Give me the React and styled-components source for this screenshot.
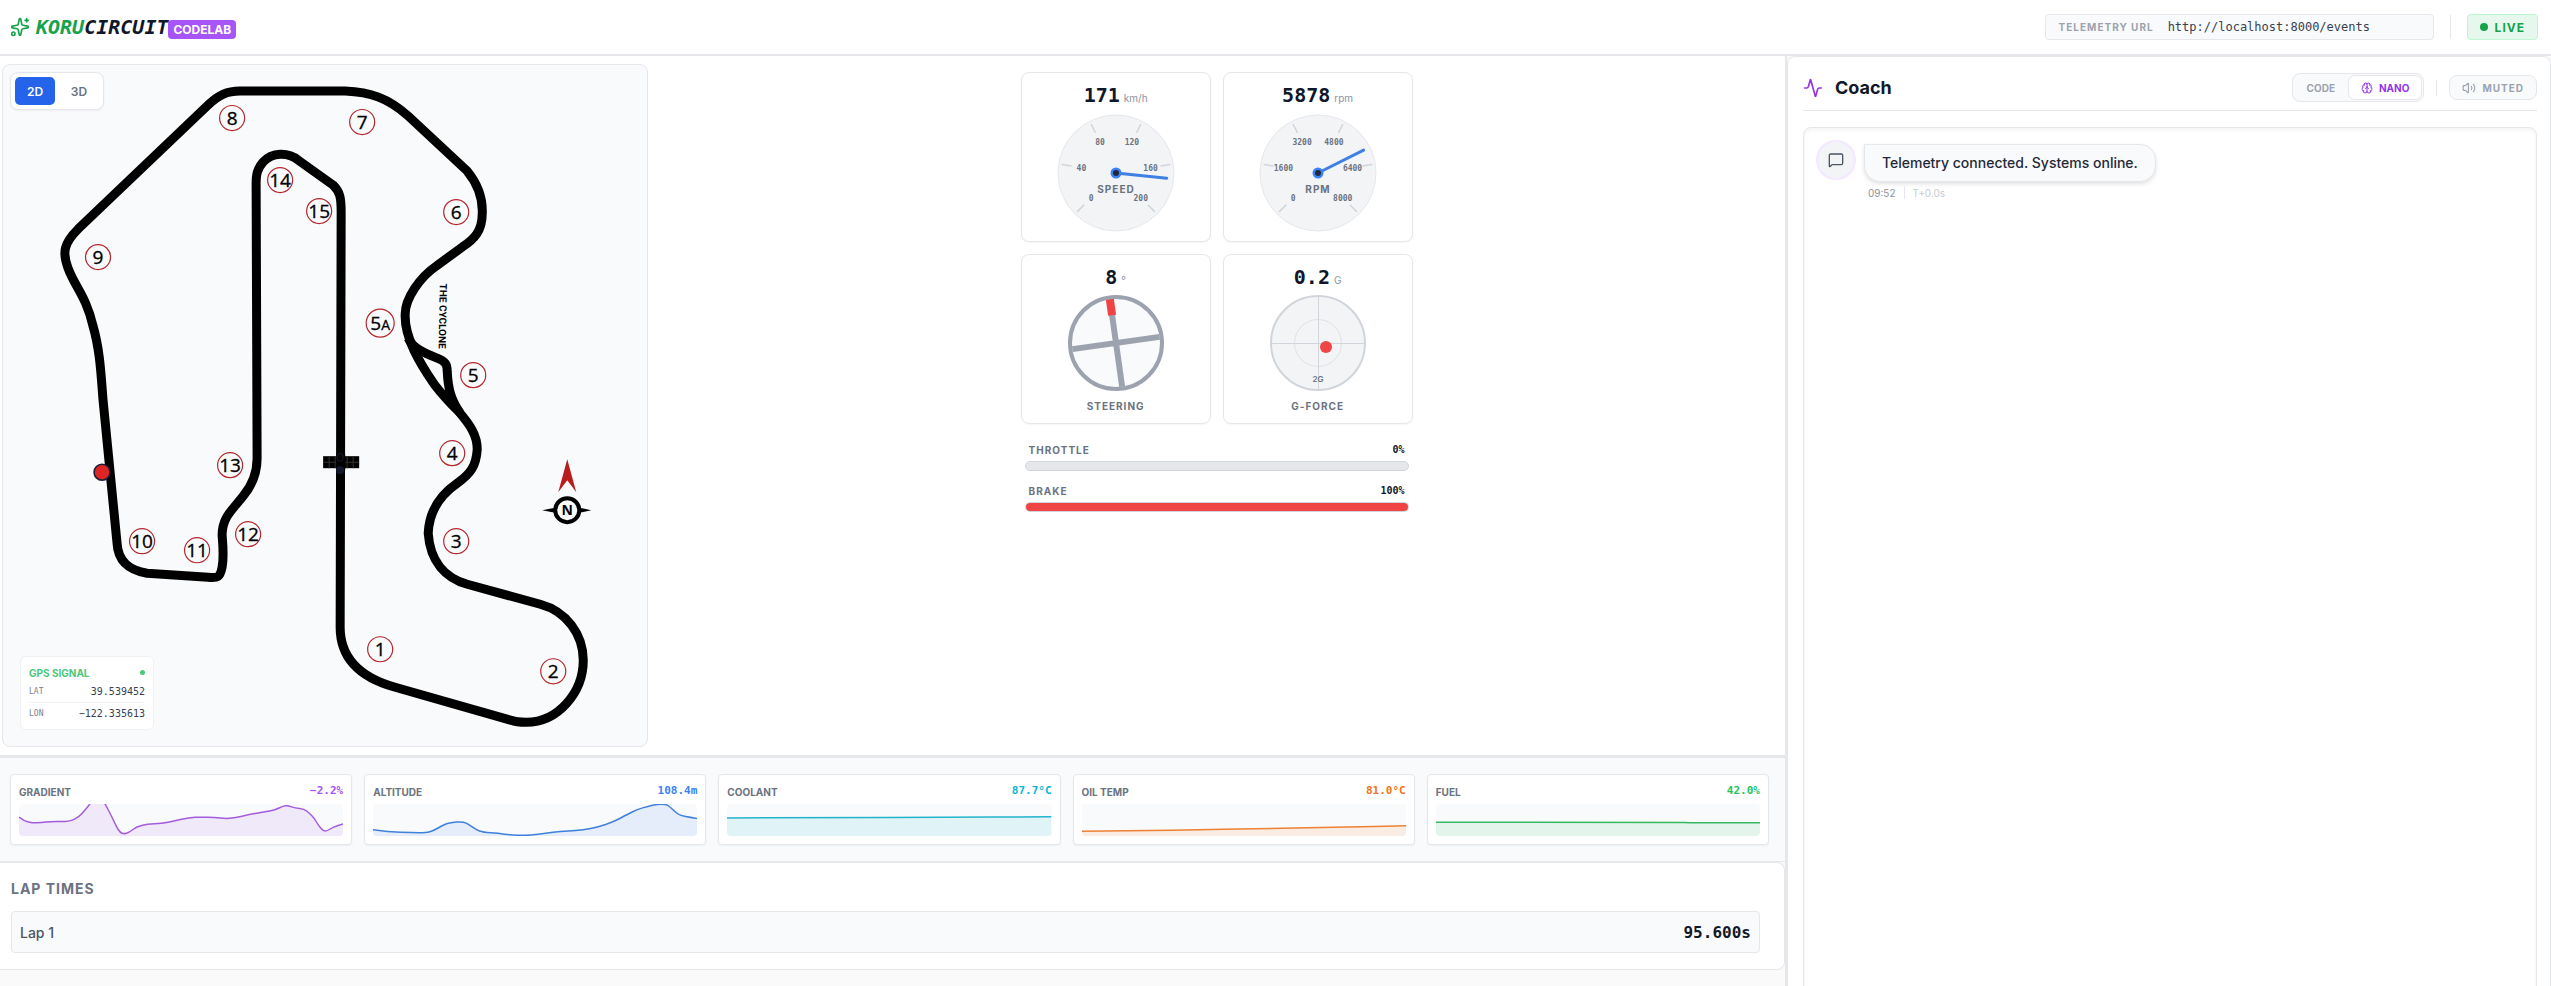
import React, { useState } from "react";
import styled, { createGlobalStyle } from "styled-components";
import { Activity, Brain, MessageSquare, Sparkles, Volume2 } from "lucide-react";

const sans = `Inter, "Liberation Sans", sans-serif`;
const mono = `"DejaVu Sans Mono", "Liberation Mono", monospace`;

const GlobalStyle = createGlobalStyle`
  * { box-sizing: border-box; }
  body {
    margin: 0;
    background: #fafafb;
    color: #111827;
    font-family: ${sans};
  }
  button, input { font-family: inherit; margin: 0; }
  ol, h1, h2, p { margin: 0; padding: 0; }
`;

const TRACK =
  "M340 627 L341 212 C341 198 340 192 333 185 L298 160 C288 152 272 152 263 162 C257 169 256 174 256 184 " +
  "L257 458 C257 474 252 485 243 496 C232 510 222 517 222 535 C223 548 224 556 222 567 C220 577 218 578 208 577 " +
  "L147 573 C130 570 118 562 117 543 L103 400 C101 375 100 350 93 326 C86 296 75 287 68 268 C62 252 64 243 78 229 " +
  "L208 105 C218 95 227 91 240 91 L345 91 C370 92 388 98 408 116 L467 171 C476 182 483 195 482 214 " +
  "C482 231 474 239 462 247 L436 266 C420 277 405 298 405 314 C404 338 420 364 434 384 C444 397 450 403 459 412 " +
  "C470 425 477 435 477 449 C476 466 470 474 457 483 C438 496 429 512 428 533 C430 562 446 578 467 584 " +
  "L540 604 C566 611 583 634 583 660 C583 692 558 722 526 722 C520 722 516 722 511 720 L395 687 C359 677 340 657 340 627 Z";

const TURNS = [
  { n: "1", x: 380, y: 649 },
  { n: "2", x: 553, y: 671 },
  { n: "3", x: 456, y: 541 },
  { n: "4", x: 452, y: 453 },
  { n: "5", x: 473, y: 375 },
  { n: "6", x: 456, y: 212 },
  { n: "7", x: 362, y: 122 },
  { n: "8", x: 232, y: 118 },
  { n: "9", x: 98, y: 257 },
  { n: "10", x: 142, y: 541 },
  { n: "11", x: 197, y: 550 },
  { n: "12", x: 248, y: 534 },
  { n: "13", x: 230, y: 465 },
  { n: "14", x: 280, y: 180 },
  { n: "15", x: 319, y: 211 },
];

const SENSORS = [
  {
    name: "GRADIENT",
    value: "−2.2%",
    color: "#a855f7",
    line: "#a45bdc",
    points: [[0, 13], [5, 17], [14, 19], [22, 18.7], [32, 17.5], [50, 17.7], [60, 13], [66, 6], [71, 0], [76, -8], [82, -8], [86, 0], [92, 11], [97, 22], [101, 28.5], [105, 30], [110, 28.5], [117, 23], [128, 20], [143, 19.7], [155, 17], [170, 13.7], [182, 13], [195, 13.5], [208, 14.7], [218, 13.3], [230, 10.5], [245, 8], [256, 6], [264, 2], [269, 1.7], [276, 4], [285, 5], [290, 9], [295, 14], [299, 21], [304, 27], [308, 27], [314, 23], [324, 20]],
  },
  {
    name: "ALTITUDE",
    value: "108.4m",
    color: "#3b82f6",
    line: "#3f80dc",
    points: [[0, 25.7], [15, 28], [40, 28.3], [52, 29], [60, 27], [70, 21], [77, 18.5], [90, 17.5], [96, 20.7], [103, 25.7], [110, 28.3], [125, 29.3], [138, 31], [150, 31.5], [165, 30.5], [180, 28], [195, 27], [210, 26], [225, 23], [240, 18], [255, 10], [264, 5.5], [275, 2.3], [284, 0.3], [292, 0.3], [296, 2], [302, 8], [307, 11.5], [318, 13.5], [324, 14.5]],
  },
  {
    name: "COOLANT",
    value: "87.7°C",
    color: "#06b6d4",
    line: "#22b4cc",
    points: [[0, 14], [110, 13.6], [210, 13.2], [324, 12.8]],
  },
  {
    name: "OIL TEMP",
    value: "81.0°C",
    color: "#f97316",
    line: "#ee8134",
    points: [[0, 27.3], [60, 26.7], [120, 25.7], [190, 24.5], [260, 23], [324, 21.8]],
  },
  {
    name: "FUEL",
    value: "42.0%",
    color: "#22c55e",
    line: "#34b862",
    points: [[0, 18.2], [245, 18.2], [250, 18.7], [324, 18.7]],
  },
];

// curve through the midpoints of the samples
function smooth(points) {
  let d = `M${points[0][0]} ${points[0][1]}`;
  for (let i = 1; i < points.length - 1; i++) {
    const [x, y] = points[i];
    const [nx, ny] = points[i + 1];
    d += ` Q${x} ${y} ${(x + nx) / 2} ${(y + ny) / 2}`;
  }
  const last = points[points.length - 1];
  return d + ` L${last[0]} ${last[1]}`;
}

function polar(r, deg) {
  const a = (deg * Math.PI) / 180;
  return [60 + r * Math.sin(a), 60 - r * Math.cos(a)];
}

function Dial({ label, value, max }) {
  const ticks = [0, 1, 2, 3, 4, 5];
  const [nx, ny] = polar(51, -135 + (value / max) * 270);
  return (
    <DialSvg viewBox="0 0 120 120">
      <circle cx="60" cy="60" r="58" fill="#f3f4f6" stroke="#e5e7eb" />
      {ticks.map((i) => {
        const deg = -135 + i * 54;
        const [x1, y1] = polar(55, deg);
        const [x2, y2] = polar(45, deg);
        const [tx, ty] = polar(35, deg);
        return (
          <g key={i}>
            <line x1={x1} y1={y1} x2={x2} y2={y2} stroke="#d1d5db" strokeWidth="1.5" />
            <DialNumber x={tx} y={ty + 3}>{(max / 5) * i}</DialNumber>
          </g>
        );
      })}
      <DialName x="60" y="80">{label}</DialName>
      <line x1="60" y1="60" x2={nx} y2={ny} stroke="#3f80e4" strokeWidth="3" strokeLinecap="round" />
      <circle cx="60" cy="60" r="5.5" fill="#3b82f6" />
      <circle cx="60" cy="60" r="3" fill="#1f2937" />
    </DialSvg>
  );
}

function TrackMap() {
  return (
    <MapSvg viewBox="3 65 644 681">
      <path d={TRACK} fill="none" stroke="#000" strokeWidth="9" strokeLinejoin="round" />
      <path
        d="M408 338 C413 349 427 354 437 358 C445 361 447 364 447 371 C448 390 451 400 460 413"
        fill="none"
        stroke="#000"
        strokeWidth="9"
      />
      <rect x="323" y="456" width="36" height="12" fill="#000" />
      <path d="M323 462H359M329 456V468M335 456V468M347 456V468M353 456V468" stroke="#333" strokeWidth="1" />
      <rect x="336" y="454" width="9" height="16" fill="#000" />
      <circle cx="340" cy="470" r="4" fill="#14182c" />
      <ellipse cx="340" cy="457" rx="3" ry="4" fill="none" stroke="#14182c" />
      {TURNS.map((t) => (
        <g key={t.n}>
          <circle cx={t.x} cy={t.y} r="12.5" fill="none" stroke="#b3272d" strokeWidth="1.2" />
          <TurnNumber x={t.x} y={t.y + 7}>{t.n}</TurnNumber>
        </g>
      ))}
      <circle cx="380" cy="323" r="14" fill="none" stroke="#b3272d" strokeWidth="1.2" />
      <TurnNumber x="380" y="330">5<tspan fontSize="14">A</tspan></TurnNumber>
      <CycloneName transform="translate(439 316) rotate(91)">THE CYCLONE</CycloneName>
      <path d="M567 459 L576 492 L567 480 L558 492 Z" fill="#b91c1c" />
      <path d="M542 510 L552 508 H582 L591 510 L582 512 H552 Z" fill="#000" />
      <circle cx="567" cy="510" r="12" fill="#f9fafb" stroke="#000" strokeWidth="4" />
      <CompassLetter x="567" y="515">N</CompassLetter>
      <circle cx="102" cy="472" r="8" fill="#dc2626" stroke="#1e1b3a" strokeWidth="1.5" />
    </MapSvg>
  );
}

function Spark({ sensor }) {
  const d = smooth(sensor.points);
  return (
    <SparkCard>
      <SparkHead>
        <SparkName>{sensor.name}</SparkName>
        <SparkValue $color={sensor.color}>{sensor.value}</SparkValue>
      </SparkHead>
      <SparkSvg viewBox="0 0 324 32" preserveAspectRatio="none">
        <path d={`${d} L324 32 L0 32 Z`} fill={sensor.color} fillOpacity="0.1" />
        <path d={d} fill="none" stroke={sensor.line} strokeWidth="1.5" vectorEffect="non-scaling-stroke" />
      </SparkSvg>
    </SparkCard>
  );
}

function Pedal({ name, percent, color }) {
  return (
    <PedalBlock>
      <PedalHead>
        <Caption>{name}</Caption>
        <PedalValue>{percent}%</PedalValue>
      </PedalHead>
      <PedalTrack role="progressbar" aria-label={name} aria-valuenow={percent}>
        <PedalFill $color={color} style={{ width: percent + "%" }} />
      </PedalTrack>
    </PedalBlock>
  );
}

export default function App() {
  const [view, setView] = useState("2D");
  const [mode, setMode] = useState("NANO");
  const [url, setUrl] = useState("http://localhost:8000/events");

  return (
    <Page>
      <GlobalStyle />
      <Header>
        <Brand>
          <Sparkles size={20} color="#16a34a" />
          <Logo><em>KORU</em>CIRCUIT</Logo>
          <Badge>CODELAB</Badge>
        </Brand>
        <HeaderRight>
          <UrlBox>
            <label htmlFor="telemetryUrl">TELEMETRY URL</label>
            <input id="telemetryUrl" type="text" value={url} onChange={(e) => setUrl(e.target.value)} />
          </UrlBox>
          <HeaderLine />
          <Live><i />LIVE</Live>
        </HeaderRight>
      </Header>

      <Body>
        <Main>
          <TopArea>
            <MapCard>
              <TrackMap />
              <ViewToggle>
                {["2D", "3D"].map((v) => (
                  <ViewButton key={v} $on={view === v} onClick={() => setView(v)}>{v}</ViewButton>
                ))}
              </ViewToggle>
              <GpsBox>
                <GpsHead>GPS SIGNAL<i /></GpsHead>
                <GpsRow><small>LAT</small>39.539452</GpsRow>
                <GpsRow $line><small>LON</small>−122.335613</GpsRow>
              </GpsBox>
            </MapCard>

            <Gauges>
              <GaugeGrid>
                <GaugeCard>
                  <Reading><b>171</b><span>km/h</span></Reading>
                  <Dial label="SPEED" value={171} max={200} />
                </GaugeCard>
                <GaugeCard>
                  <Reading><b>5878</b><span>rpm</span></Reading>
                  <Dial label="RPM" value={5878} max={8000} />
                </GaugeCard>
                <GaugeCard>
                  <Reading><b>8</b><span>°</span></Reading>
                  <RoundSvg viewBox="0 0 96 96">
                    <circle cx="48" cy="48" r="46" fill="#f9fafb" stroke="#9ca3af" strokeWidth="4" />
                    <g transform="rotate(-8 48 48)">
                      <path d="M4 48H92M48 4V92" stroke="#9ca3af" strokeWidth="6" />
                      <rect x="44" y="4" width="8" height="16" fill="#ef4444" />
                    </g>
                  </RoundSvg>
                  <Caption>STEERING</Caption>
                </GaugeCard>
                <GaugeCard>
                  <Reading><b>0.2</b><span>G</span></Reading>
                  <RoundSvg viewBox="0 0 96 96">
                    <circle cx="48" cy="48" r="47" fill="#f3f4f6" stroke="#d1d5db" strokeWidth="2" />
                    <circle cx="48" cy="48" r="23.5" fill="none" stroke="#e0e2e6" />
                    <path d="M2 48.5H94M48.5 2V94" stroke="#d1d5db" />
                    <GLimit x="48" y="87">2G</GLimit>
                    <circle cx="56" cy="52" r="6" fill="#ef4444" />
                  </RoundSvg>
                  <Caption>G-FORCE</Caption>
                </GaugeCard>
              </GaugeGrid>
              <Pedals>
                <Pedal name="THROTTLE" percent={0} color="#22c55e" />
                <Pedal name="BRAKE" percent={100} color="#ef4444" />
              </Pedals>
            </Gauges>
          </TopArea>

          <SparkRow>
            {SENSORS.map((s) => <Spark key={s.name} sensor={s} />)}
          </SparkRow>

          <LapPanel>
            <LapTitle>LAP TIMES</LapTitle>
            <LapList>
              <LapItem><span>Lap 1</span><b>95.600s</b></LapItem>
            </LapList>
          </LapPanel>
        </Main>

        <Aside>
          <CoachPanel>
            <CoachHead>
              <CoachTitle>
                <Activity size={20} color="#9333ea" strokeWidth={2} />
                <h2>Coach</h2>
              </CoachTitle>
              <CoachTools>
                <ModeGroup>
                  <ModeButton $on={mode === "CODE"} onClick={() => setMode("CODE")}>CODE</ModeButton>
                  <ModeButton $on={mode === "NANO"} onClick={() => setMode("NANO")}>
                    <Brain size={12} />NANO
                  </ModeButton>
                </ModeGroup>
                <ToolLine />
                <MuteButton><Volume2 size={14} />MUTED</MuteButton>
              </CoachTools>
            </CoachHead>
            <Chat>
              <Avatar><MessageSquare size={16} /></Avatar>
              <div>
                <Bubble>Telemetry connected. Systems online.</Bubble>
                <Meta><span>09:52</span><i /><em>T+0.0s</em></Meta>
              </div>
            </Chat>
          </CoachPanel>
        </Aside>
      </Body>
    </Page>
  );
}

const Page = styled.div`
  height: 100vh;
  display: flex;
  flex-direction: column;
  overflow: hidden;
`;

const Header = styled.header`
  height: 56px;
  flex: none;
  display: flex;
  align-items: center;
  justify-content: space-between;
  padding: 0 13px 0 10px;
  background: #fff;
  border-bottom: 2px solid #e5e7eb;
`;

const Brand = styled.div`
  display: flex;
  align-items: center;
`;

const Logo = styled.h1`
  margin-left: 6px;
  font: italic bold 20px/28px ${mono};
  color: #0f172a;
  em {
    color: #16a34a;
  }
`;

const Badge = styled.span`
  margin-top: 4px;
  padding: 0 5px;
  border-radius: 4px;
  background: #a855f7;
  color: #fff;
  font-size: 12px;
  font-weight: 700;
  line-height: 19px;
`;

const HeaderRight = styled.div`
  display: flex;
  align-items: center;
  gap: 16px;
`;

const UrlBox = styled.div`
  display: flex;
  align-items: center;
  gap: 14px;
  width: 389px;
  height: 26px;
  padding: 0 13px;
  border: 1px solid #e5e7eb;
  border-radius: 4px;
  background: #f9fafb;
  label {
    flex: none;
    color: #9ca3af;
    font-size: 10px;
    font-weight: 700;
    letter-spacing: 1px;
  }
  input {
    flex: 1;
    min-width: 0;
    padding: 0;
    border: 0;
    outline: 0;
    background: transparent;
    color: #374151;
    font: 12px ${mono};
  }
`;

const HeaderLine = styled.div`
  width: 1px;
  height: 24px;
  background: #e5e7eb;
`;

const Live = styled.div`
  display: flex;
  align-items: center;
  gap: 7px;
  height: 26px;
  padding: 0 12px;
  border: 1px solid #bbf7d0;
  border-radius: 4px;
  background: #e6f8ed;
  color: #16a34a;
  font-size: 12px;
  font-weight: 700;
  letter-spacing: 1px;
  i {
    width: 8px;
    height: 8px;
    border-radius: 50%;
    background: #16a34a;
  }
`;

const Body = styled.div`
  flex: 1;
  min-height: 0;
  display: grid;
  grid-template-columns: 233fr 100fr;
`;

const Main = styled.main`
  min-width: 0;
  overflow: hidden;
`;

const TopArea = styled.section`
  display: grid;
  grid-template-columns: 29fr 51fr;
  padding: 8px 0 8px 2px;
  background: #fff;
  border-bottom: 3px solid #e5e7eb;
`;

const MapCard = styled.div`
  position: relative;
  border: 1px solid #e5e7eb;
  border-radius: 8px;
  background: #f9fafb;
`;

const MapSvg = styled.svg`
  display: block;
  width: 100%;
`;

const TurnNumber = styled.text`
  font: 500 19px "Open Sans", sans-serif;
  stroke: #000;
  stroke-width: 0.3px;
  text-anchor: middle;
`;

const CycloneName = styled.text`
  font: 700 10px Roboto, sans-serif;
  text-anchor: middle;
`;

const CompassLetter = styled.text`
  font: 700 14px "Open Sans", sans-serif;
  text-anchor: middle;
`;

const ViewToggle = styled.div`
  position: absolute;
  top: 7px;
  left: 7px;
  display: flex;
  gap: 4px;
  padding: 4px;
  border: 1px solid #e5e7eb;
  border-radius: 8px;
  background: #fff;
  box-shadow: 0 1px 2px #0000000d;
`;

const ViewButton = styled.button`
  width: 40px;
  height: 28px;
  padding: 0;
  border: 0;
  border-radius: 5px;
  background: ${(p) => (p.$on ? "#2563eb" : "transparent")};
  color: ${(p) => (p.$on ? "#fff" : "#6b7280")};
  font-size: 12px;
  font-weight: 600;
`;

const GpsBox = styled.div`
  position: absolute;
  left: 17px;
  bottom: 16px;
  width: 134px;
  padding: 8px 8px 5px;
  border: 1px solid #f0f1f3;
  border-radius: 6px;
  background: #fff;
`;

const GpsHead = styled.div`
  display: flex;
  justify-content: space-between;
  align-items: center;
  height: 15px;
  color: #4ac77a;
  font-size: 10px;
  font-weight: 700;
  i {
    width: 5px;
    height: 5px;
    border-radius: 50%;
    background: #4ac77a;
  }
`;

const GpsRow = styled.div`
  display: flex;
  justify-content: space-between;
  align-items: center;
  height: 22px;
  border-top: ${(p) => (p.$line ? "1px solid #f3f4f6" : "0")};
  color: #374151;
  font: 10px ${mono};
  small {
    color: #7b828e;
    font-size: 8px;
  }
`;

const Gauges = styled.div`
  justify-self: center;
  width: 100%;
  max-width: 392px;
`;

const GaugeGrid = styled.div`
  display: grid;
  grid-template-columns: 1fr 1fr;
  gap: 12px;
  padding-top: 8px;
`;

const GaugeCard = styled.div`
  display: flex;
  flex-direction: column;
  align-items: center;
  height: 170px;
  padding-top: 8px;
  border: 1px solid #e5e7eb;
  border-radius: 8px;
  background: #fff;
  box-shadow: 0 1px 2px #0000000a;
`;

const Reading = styled.div`
  display: flex;
  align-items: baseline;
  gap: 4px;
  height: 32px;
  line-height: 28px;
  b {
    color: #0f172a;
    font-family: ${mono};
    font-size: 20px;
  }
  span {
    color: #8a92a0;
    font-size: 10px;
  }
`;

const DialSvg = styled.svg`
  width: 120px;
  height: 120px;
`;

const DialNumber = styled.text`
  font: bold 8px ${mono};
  fill: #6b7280;
  text-anchor: middle;
`;

const DialName = styled.text`
  font: 700 10px ${sans};
  letter-spacing: 1px;
  fill: #6b7280;
  text-anchor: middle;
`;

const RoundSvg = styled.svg`
  width: 96px;
  height: 96px;
  margin-bottom: 7px;
`;

const GLimit = styled.text`
  font: 600 8px ${sans};
  fill: #6b7280;
  text-anchor: middle;
`;

const Caption = styled.div`
  color: #6b7280;
  font-size: 10px;
  font-weight: 700;
  line-height: 16px;
  letter-spacing: 1px;
`;

const Pedals = styled.div`
  display: grid;
  gap: 12px;
  padding: 18px 4px 0;
`;

const PedalBlock = styled.div`
  display: grid;
  gap: 3px;
`;

const PedalHead = styled.div`
  display: flex;
  justify-content: space-between;
  padding: 0 4px;
`;

const PedalValue = styled.div`
  font: bold 10px/16px ${mono};
`;

const PedalTrack = styled.div`
  height: 10px;
  border: 1px solid #d1d5db;
  border-radius: 5px;
  background: #e5e7eb;
  overflow: hidden;
`;

const PedalFill = styled.div`
  height: 100%;
  background: ${(p) => p.$color};
`;

const SparkRow = styled.section`
  display: grid;
  grid-template-columns: repeat(5, 1fr);
  gap: 12px;
  padding: 16px 16px 16px 10px;
  background: #f9fafb;
  border-bottom: 1px solid #e5e7eb;
`;

const SparkCard = styled.div`
  padding: 8px;
  border: 1px solid #e5e7eb;
  border-radius: 4px;
  background: #fff;
  box-shadow: 0 1px 2px #0000000d;
`;

const SparkHead = styled.div`
  display: flex;
  justify-content: space-between;
  height: 21px;
`;

const SparkName = styled.div`
  color: #6b7280;
  font-size: 10px;
  font-weight: 700;
  line-height: 18px;
`;

const SparkValue = styled.div`
  color: ${(p) => p.$color};
  font: bold 11px/16px ${mono};
`;

const SparkSvg = styled.svg`
  display: block;
  width: 100%;
  height: 32px;
  border-radius: 4px;
  background: #f9fafb;
`;

const LapPanel = styled.section`
  padding: 16px 24px 16px 11px;
  border: 1px solid #e5e7eb;
  border-left: 0;
  border-radius: 0 8px 8px 0;
  background: #fff;
`;

const LapTitle = styled.h2`
  margin-bottom: 12px;
  color: #6b7280;
  font-size: 14px;
  font-weight: 700;
  line-height: 20px;
  letter-spacing: 1px;
`;

const LapList = styled.ol`
  list-style: none;
`;

const LapItem = styled.li`
  display: flex;
  justify-content: space-between;
  align-items: center;
  height: 42px;
  padding: 0 8px;
  border: 1px solid #e5e7eb;
  border-radius: 4px;
  background: #f9fafb;
  color: #4b5563;
  font-size: 14px;
  font-weight: 500;
  b {
    color: #111827;
    font: bold 16px ${mono};
  }
`;

const Aside = styled.aside`
  min-width: 0;
  border-left: 2px solid #e5e7eb;
  overflow: hidden;
`;

const CoachPanel = styled.div`
  padding: 16px 13px 0 15px;
  border: 1px solid #e5e7eb;
  border-radius: 8px;
  background: #fff;
`;

const CoachHead = styled.div`
  display: flex;
  justify-content: space-between;
  align-items: center;
  padding-bottom: 8px;
  border-bottom: 1px solid #e5e7eb;
`;

const CoachTitle = styled.div`
  display: flex;
  align-items: center;
  gap: 12px;
  h2 {
    font-size: 18px;
    font-weight: 700;
    line-height: 28px;
  }
`;

const CoachTools = styled.div`
  display: flex;
  align-items: center;
  gap: 12px;
`;

const ModeGroup = styled.div`
  display: flex;
  padding: 1px;
  border: 1px solid #e5e7eb;
  border-radius: 8px;
  background: #f9fafb;
`;

const ModeButton = styled.button`
  display: flex;
  align-items: center;
  gap: 6px;
  height: 25px;
  padding: 0 12px;
  border: 1px solid ${(p) => (p.$on ? "#e5e7eb" : "transparent")};
  border-radius: 7px;
  background: ${(p) => (p.$on ? "#fff" : "transparent")};
  color: ${(p) => (p.$on ? "#9333ea" : "#9ca3af")};
  font-size: 10px;
  font-weight: 700;
`;

const ToolLine = styled.div`
  width: 1px;
  height: 16px;
  background: #e5e7eb;
`;

const MuteButton = styled.button`
  display: flex;
  align-items: center;
  gap: 6px;
  height: 25px;
  padding: 0 12px;
  border: 1px solid #e5e7eb;
  border-radius: 8px;
  background: #f9fafb;
  color: #9ca3af;
  font-size: 10px;
  font-weight: 700;
  letter-spacing: 1px;
`;

const Chat = styled.div`
  display: flex;
  align-items: flex-start;
  gap: 8px;
  min-height: 100vh;
  margin-top: 16px;
  padding: 12px;
  border: 1px solid #e5e7eb;
  border-radius: 8px;
  box-shadow: inset 0 2px 4px #0000000d;
`;

const Avatar = styled.div`
  display: flex;
  align-items: center;
  justify-content: center;
  flex: none;
  width: 40px;
  height: 40px;
  border: 2px solid #f3e8ff;
  border-radius: 50%;
  background: #f3f4f6;
  color: #4b5563;
`;

const Bubble = styled.p`
  margin-top: 4px;
  padding: 8px 17px;
  border: 1px solid #e5e7eb;
  border-radius: 0 16px 16px 16px;
  background: #f9fafb;
  box-shadow: 0 2px 4px #0000001f;
  color: #1f2937;
  font-size: 14px;
  font-weight: 500;
  line-height: 20px;
`;

const Meta = styled.div`
  display: flex;
  align-items: center;
  gap: 8px;
  margin: 4px 0 0 4px;
  color: #8a92a0;
  font-size: 10px;
  i {
    width: 1px;
    height: 13px;
    background: #e5e7eb;
  }
  em {
    color: #c6cad1;
    font-style: normal;
  }
`;
